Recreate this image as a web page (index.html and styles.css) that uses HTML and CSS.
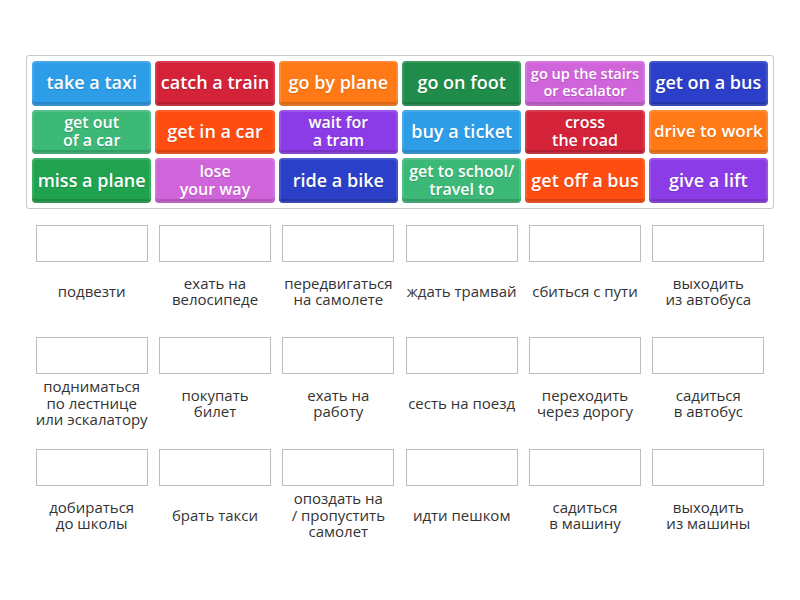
FILE: index.html
```html
<!DOCTYPE html>
<html lang="ru">
<head>
<meta charset="utf-8">
<link rel="stylesheet" href="styles.css">
</head>
<body>
<div class="wrap">
  <div class="bank">
    <div class="tile blue">take a taxi</div>
    <div class="tile red">catch a train</div>
    <div class="tile orange">go by plane</div>
    <div class="tile dgreen">go on foot</div>
    <div class="tile pink small">go up the stairs<br>or escalator</div>
    <div class="tile navy">get on a bus</div>

    <div class="tile green two">get out<br>of a car</div>
    <div class="tile redorange">get in a car</div>
    <div class="tile purple two">wait for<br>a tram</div>
    <div class="tile blue">buy a ticket</div>
    <div class="tile red two">cross<br>the road</div>
    <div class="tile orange mid">drive to work</div>

    <div class="tile mgreen">miss a plane</div>
    <div class="tile pink two">lose<br>your way</div>
    <div class="tile navy">ride a bike</div>
    <div class="tile green two">get to school/<br>travel to</div>
    <div class="tile redorange">get off a bus</div>
    <div class="tile purple">give a lift</div>
  </div>

  <div class="targets">
    <div class="cell"><div class="slot"></div><div class="label">подвезти</div></div>
    <div class="cell"><div class="slot"></div><div class="label">ехать на<br>велосипеде</div></div>
    <div class="cell"><div class="slot"></div><div class="label">передвигаться<br>на самолете</div></div>
    <div class="cell"><div class="slot"></div><div class="label">ждать трамвай</div></div>
    <div class="cell"><div class="slot"></div><div class="label">сбиться с пути</div></div>
    <div class="cell"><div class="slot"></div><div class="label">выходить<br>из автобуса</div></div>

    <div class="cell"><div class="slot"></div><div class="label">подниматься<br>по лестнице<br>или эскалатору</div></div>
    <div class="cell"><div class="slot"></div><div class="label">покупать<br>билет</div></div>
    <div class="cell"><div class="slot"></div><div class="label">ехать на<br>работу</div></div>
    <div class="cell"><div class="slot"></div><div class="label">сесть на поезд</div></div>
    <div class="cell"><div class="slot"></div><div class="label">переходить<br>через дорогу</div></div>
    <div class="cell"><div class="slot"></div><div class="label">садиться<br>в автобус</div></div>

    <div class="cell"><div class="slot"></div><div class="label">добираться<br>до школы</div></div>
    <div class="cell"><div class="slot"></div><div class="label">брать такси</div></div>
    <div class="cell"><div class="slot"></div><div class="label">опоздать на<br>/ пропустить<br>самолет</div></div>
    <div class="cell"><div class="slot"></div><div class="label">идти пешком</div></div>
    <div class="cell"><div class="slot"></div><div class="label">садиться<br>в машину</div></div>
    <div class="cell"><div class="slot"></div><div class="label">выходить<br>из машины</div></div>
  </div>
</div>
</body>
</html>
```

FILE: styles.css
```css
html, body {
  margin: 0;
  padding: 0;
  background: #ffffff;
}

body {
  font-family: "Open Sans", "Liberation Sans", sans-serif;
}

.wrap {
  width: 748px;
  margin: 55px 0 0 26px;
}

.bank {
  border: 1px solid #c9c9c9;
  border-radius: 3px;
  padding: 5px;
  display: grid;
  grid-template-columns: repeat(6, 1fr);
  grid-auto-rows: 44.7px;
  gap: 4px 4px;
}

.tile {
  display: flex;
  align-items: center;
  justify-content: center;
  text-align: center;
  color: #ffffff;
  font-weight: 600;
  font-size: 18px;
  line-height: 20px;
  border-radius: 4px;
  white-space: nowrap;
  box-shadow: inset 0 -4px 0 rgba(0, 0, 0, 0.14), inset 0 0 0 2px rgba(255, 255, 255, 0.12);
  text-shadow: 0 1px 1px rgba(0, 0, 0, 0.15);
  padding-bottom: 2px;
  box-sizing: border-box;
}

.tile.two {
  font-size: 16px;
  line-height: 18px;
}

.tile.small {
  font-size: 14.5px;
  line-height: 17px;
}

.tile.mid {
  font-size: 17px;
}

.blue { background: #2d9de8; }
.red { background: #d42239; }
.orange { background: #ff7a17; }
.dgreen { background: #1f8d49; }
.pink { background: #d064da; }
.navy { background: #2b3fc8; }
.green { background: #3cb877; }
.redorange { background: #ff4c11; }
.purple { background: #8c3ce6; }
.mgreen { background: #21a24f; }

.targets {
  margin-top: 16px;
  padding: 0 6px;
  display: grid;
  grid-template-columns: repeat(6, 1fr);
  column-gap: 4px;
  row-gap: 17px;
}

.cell {
  display: flex;
  flex-direction: column;
  align-items: center;
}

.slot {
  width: 112px;
  height: 37px;
  box-sizing: border-box;
  border: 1px solid #bdbdbd;
  background: #ffffff;
}

.label {
  height: 58px;
  display: flex;
  align-items: center;
  justify-content: center;
  text-align: center;
  font-size: 15px;
  line-height: 16.5px;
  color: #333333;
  white-space: nowrap;
}
```
